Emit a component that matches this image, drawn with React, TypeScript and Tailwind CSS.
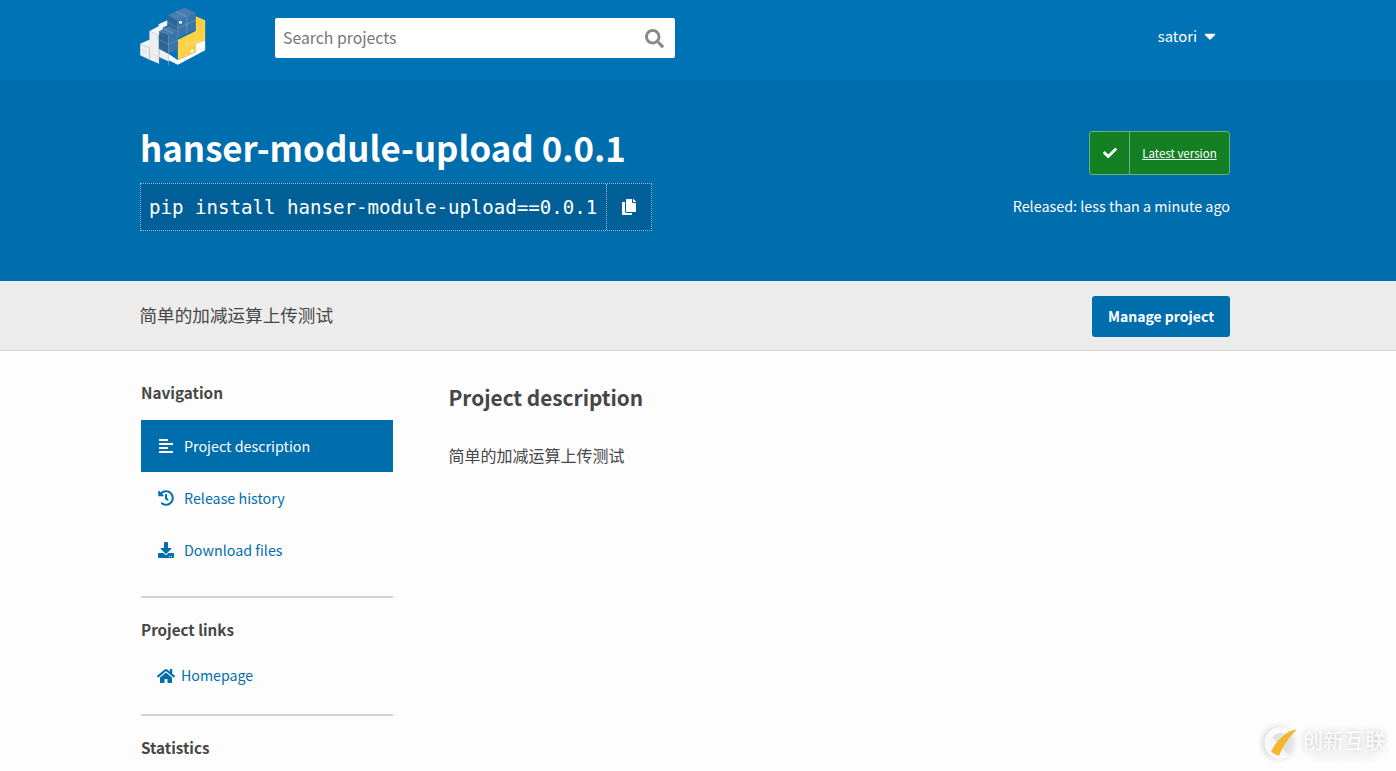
import React from "react";
import { FaSearch, FaCopy, FaCheck, FaAlignLeft, FaHistory, FaDownload, FaHome, FaCaretDown } from "react-icons/fa";

const sans = "font-['Noto_Sans_CJK_SC','Noto_Sans',sans-serif]";

function Logo() {
  return (
    <svg width="67" height="60" viewBox="30 20 200 180" className="shrink-0 mb-[6px]">
      {/* white stairs */}
      <polygon points="30,130 57,118 85,132 58,143" fill="#f7f7f7" />
      <polygon points="30,130 58,143 58,178 30,165" fill="#eeeeee" />
      <polygon points="58,92 85,78 112,92 85,105" fill="#f7f7f7" />
      <polygon points="58,92 85,105 87,190 58,178" fill="#eeeeee" />
      <polygon points="85,72 112,60 112,75 87,88" fill="#f4f4f4" />
      <polygon points="87,145 115,160 115,183 87,170" fill="#eeeeee" />
      <g stroke="#cfcfcf" strokeWidth="1.2" fill="none">
        <path d="M30 130 L58 143 L58 178 M85 105 V190 M30 148 L115 182 M58 92 L85 105 M58 92 V143 M115 160 V196" />
      </g>
      {/* blue upper */}
      <polygon points="112,44 165,22 197,37 143,62" fill="#4a7eae" />
      <polygon points="112,44 143,62 143,105 112,85" fill="#2f6496" />
      <polygon points="143,62 197,37 197,88 143,112" fill="#3a74a8" />
      {/* yellow */}
      <polygon points="197,48 225,60 225,120 197,130 197,155 143,180 143,118 197,92" fill="#ffd042" />
      {/* white base */}
      <polygon points="115,160 143,180 197,155 197,130 225,120 225,150 143,193 115,180" fill="#fdfdfd" />
      {/* blue lower */}
      <polygon points="87,92 115,78 143,92 115,106" fill="#4a7eae" />
      <polygon points="87,92 115,106 115,160 87,145" fill="#2f6496" />
      <polygon points="115,106 143,92 143,148 115,160" fill="#3a74a8" />
      {/* grid lines */}
      <g stroke="#ffffff" strokeOpacity="0.4" strokeWidth="1.5" fill="none">
        <path d="M143 62 V112 M170 50 V100 M112 65 L143 84 L197 60 M138 33 L170 50" />
        <path d="M115 106 V160 M87 118 L115 132 L143 120 M101 85 L129 99" />
        <path d="M170 105 V170 M197 92 V155 M143 150 L225 112 M143 118 L170 132 L197 122 L225 135" />
      </g>
      <circle cx="151" cy="66" r="4.5" fill="#ffffff" />
      <circle cx="186" cy="152" r="4.5" fill="#ffffff" />
    </svg>
  );
}

function Watermark() {
  return (
    <div className="absolute right-[10px] bottom-[8px] flex items-center gap-[3px]">
      <svg width="40" height="40" viewBox="0 0 40 40" className="shrink-0">
        <defs>
          <filter id="wm" x="-30%" y="-30%" width="160%" height="160%">
            <feGaussianBlur stdDeviation="2.5" />
          </filter>
        </defs>
        <circle cx="19" cy="20" r="17" fill="#8f8f8f" opacity="0.25" filter="url(#wm)" />
        <path d="M31 7 A16 16 0 1 0 31 33 L26 29 A10 10 0 1 1 26 11 Z" fill="#fafafa" />
        <path d="M12 13 L29 32 L21 33 L8 19 Z" fill="#f6f6f6" />
        <path d="M38 6 C28 8 18 16 12 29 L20 33 C23 25 30 14 38 6 Z" fill="#f5b52e" />
      </svg>
      <div className="flex flex-col items-center [text-shadow:0_0_6px_#b5b5b5]">
        <span className="text-[21px] leading-[25px] text-[#fdfdfd] font-['Noto_Sans_CJK_SC',sans-serif]">创新互联</span>
        <span className="text-[6px] leading-[8px] text-[#f8f8f8] font-['Liberation_Sans',sans-serif] whitespace-nowrap">CHUANG XIN HU LIAN</span>
      </div>
    </div>
  );
}

function NavItem({ icon, label, active }: { icon: React.ReactNode; label: string; active?: boolean }) {
  return (
    <a className={`flex items-center h-[52px] pl-[17px] text-[14.3px] ${active ? "bg-[#006dad] text-white" : "text-[#006dad]"}`}>
      <span className="w-[26px] flex items-center text-[16px]">{icon}</span>
      <span>{label}</span>
    </a>
  );
}

export default function App() {
  return (
    <div className={`relative h-screen overflow-hidden bg-[#fdfdfd] text-[#464646] ${sans}`}>
      <header className="h-[80px] bg-[#0073b7]">
        <div className="w-[1090px] ml-[140px] h-full flex items-center">
          <Logo />
          <div className="ml-[68px] mb-[4px] w-[400px] h-[40px] bg-white rounded-[2px] flex items-center justify-between pl-[8px] pr-[11px]">
            <span className="text-[15.8px] text-[#777777]">Search projects</span>
            <FaSearch className="text-[#8a8a8a] text-[19px]" />
          </div>
          <div className="ml-auto mb-[8px] pr-[11px] flex items-center text-white text-[14.8px]">
            <span>satori</span>
            <FaCaretDown className="ml-[4px] text-[18px]" />
          </div>
        </div>
      </header>

      <section className="h-[201px] bg-[#006dad] text-white">
        <div className="w-[1090px] ml-[140px] flex justify-between">
          <div>
            <h1 className="mt-[37px] h-[60px] leading-[60px] text-[34.8px] font-semibold whitespace-nowrap">hanser-module-upload 0.0.1</h1>
            <div className="mt-[6px] w-[512px] h-[48px] flex bg-[#005f96] border border-dotted border-[#8dbdd8]">
              <span className="pl-[8px] w-[465px] leading-[48px] text-[19.1px] whitespace-nowrap font-['DejaVu_Sans_Mono',monospace]">
                pip install hanser-module-upload==0.0.1
              </span>
              <span className="flex-1 flex items-center justify-center border-l border-dotted border-[#8dbdd8] text-[16px]">
                <FaCopy />
              </span>
            </div>
          </div>
          <div className="flex flex-col items-end">
            <div className="mt-[51px] w-[141px] h-[44px] flex bg-[#148024] border border-[#6fae7a] rounded-[3px]">
              <span className="w-[40px] flex items-center justify-center border-r border-[#6fae7a] text-[14px]">
                <FaCheck />
              </span>
              <span className="flex-1 flex items-center justify-center pt-[2px] text-[11.5px] underline">Latest version</span>
            </div>
            <p className="mt-[19px] text-[14.35px] leading-[24px]">Released: less than a minute ago</p>
          </div>
        </div>
      </section>

      <section className="h-[70px] bg-[#ececec] border-b border-[#d3d3d3]">
        <div className="w-[1090px] ml-[140px] h-full flex items-center justify-between">
          <p className="-ml-[0.5px] text-[17.6px]">简单的加减运算上传测试</p>
          <button className="mt-[2px] w-[138px] h-[41px] bg-[#006dad] text-white rounded-[3px] text-[14px] font-semibold">Manage project</button>
        </div>
      </section>

      <main className="w-[1090px] ml-[141px] flex">
        <aside className="w-[252px] shrink-0">
          <h3 className="mt-[28px] h-[26px] leading-[26px] text-[15.3px] font-semibold">Navigation</h3>
          <nav className="mt-[15px]">
            <NavItem active icon={<FaAlignLeft />} label="Project description" />
            <NavItem icon={<FaHistory />} label="Release history" />
            <NavItem icon={<FaDownload />} label="Download files" />
          </nav>
          <hr className="mt-[20px] border-0 h-[2px] bg-[#d3d3d3]" />
          <h3 className="mt-[18px] h-[26px] leading-[26px] text-[15.2px] font-semibold">Project links</h3>
          <a className="mt-[11px] flex items-center h-[46px] pl-[16px] text-[14.2px] text-[#006dad]">
            <FaHome className="text-[18px] w-[18px] mr-[6px]" />
            <span>Homepage</span>
          </a>
          <hr className="mt-[15px] border-0 h-[2px] bg-[#d3d3d3]" />
          <h3 className="mt-[18px] h-[26px] leading-[26px] text-[15.2px] font-semibold">Statistics</h3>
        </aside>
        <article className="ml-[55.5px]">
          <h2 className="mt-[28px] h-[36px] leading-[36px] text-[20.8px] font-semibold">Project description</h2>
          <p className="mt-[28px] h-[24px] leading-[24px] text-[16px]">简单的加减运算上传测试</p>
        </article>
      </main>

      <Watermark />
    </div>
  );
}
